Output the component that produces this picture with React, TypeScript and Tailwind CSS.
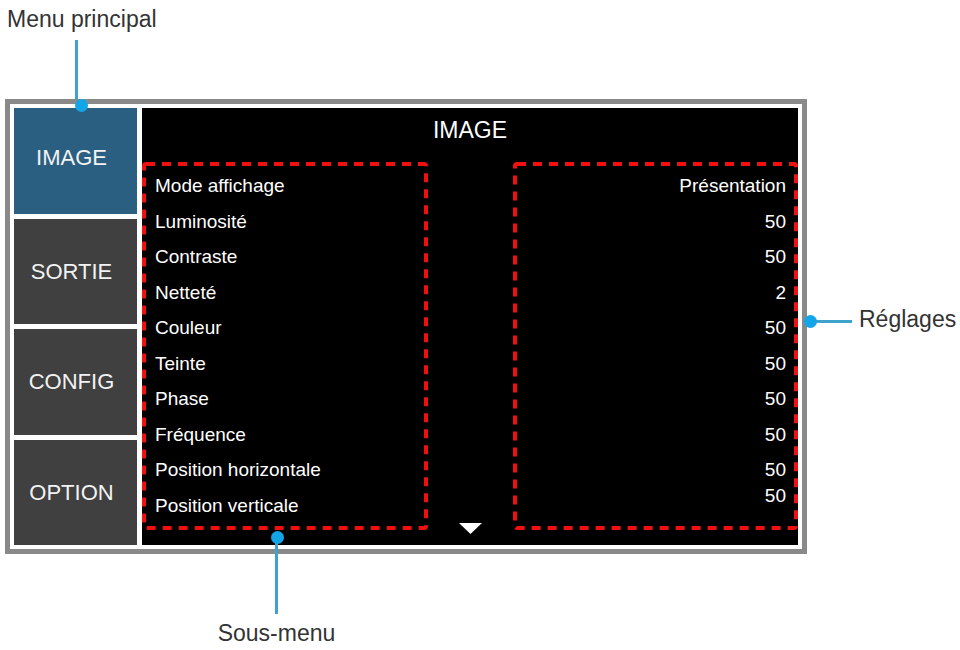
import React from "react";

const labels = [
  "Mode affichage",
  "Luminosité",
  "Contraste",
  "Netteté",
  "Couleur",
  "Teinte",
  "Phase",
  "Fréquence",
  "Position horizontale",
  "Position verticale",
];

const values = ["Présentation", "50", "50", "2", "50", "50", "50", "50", "50", "50"];

const menu = ["IMAGE", "SORTIE", "CONFIG", "OPTION"];

function DashedBox({ w, h }: { w: number; h: number }) {
  return (
    <svg className="absolute inset-0 pointer-events-none" width={w} height={h} viewBox={`0 0 ${w} ${h}`}>
      <rect
        x={2}
        y={2}
        width={w - 4}
        height={h - 4}
        rx={2}
        fill="none"
        stroke="#f01010"
        strokeWidth={4}
        strokeDasharray="9 7"
      />
    </svg>
  );
}

function Dot({ className }: { className: string }) {
  return <div className={`absolute z-10 w-[13px] h-[13px] rounded-full bg-[#12a5e8] ${className}`} />;
}

export default function App() {
  return (
    <div className="w-[960px] h-[650px] bg-white overflow-hidden font-['Liberation_Sans',Arial,sans-serif] text-[#333333] flex flex-col">
      {/* Menu principal callout */}
      <div className="pl-[7px] pt-[8px] text-[23px] leading-[23px] whitespace-nowrap">Menu principal</div>
      <div className="ml-[74.5px] mt-[9px] w-[3px] h-[59px] bg-[#3ea3cc]" />

      {/* Frame row with Réglages callout */}
      <div className="flex items-start">
        <div className="relative ml-[5px] w-[802px] h-[455px] border-[5px] border-[#898989] bg-white p-[4px] flex gap-[5px]">
          <Dot className="left-[65px] top-[-5px]" />
          <Dot className="right-[-15px] top-[211px]" />
          <Dot className="left-[260.5px] bottom-[5.5px]" />
          {/* Main menu */}
          <div className="w-[123px] flex flex-col gap-[5px]">
            {menu.map((m, i) => (
              <div
                key={m}
                className={`flex-1 flex items-center justify-center pr-[8px] text-[22px] text-[#f2f2f2] ${
                  i === 0 ? "bg-[#2b5f82]" : "bg-[#404040]"
                }`}
              >
                <span className={i === 0 ? "mb-[7px]" : ""}>{m}</span>
              </div>
            ))}
          </div>
          {/* Panel */}
          <div className="flex-1 bg-black flex flex-col text-white">
            <div className="h-[54px] pt-[5px] text-center text-[23px] leading-normal">IMAGE</div>
            <div className="flex-1 flex items-start">
              <div className="relative w-[286px] h-[368px] pl-[13px] pt-[6px] text-[19px]">
                <DashedBox w={286} h={368} />
                {labels.map((l) => (
                  <div key={l} className="h-[35.5px] leading-[35.5px] whitespace-nowrap">
                    {l}
                  </div>
                ))}
              </div>
              <div className="flex-1 self-stretch flex items-end justify-center pb-[11px]">
                <svg width="23" height="11" viewBox="0 0 23 11">
                  <polygon points="0,0 23,0 11.5,11" fill="#ffffff" />
                </svg>
              </div>
              <div className="relative w-[285px] h-[368px] pr-[12px] pt-[6px] text-[19px] text-right">
                <DashedBox w={285} h={368} />
                {values.map((v, i) => (
                  <div
                    key={i}
                    className={`h-[35.5px] leading-[35.5px] whitespace-nowrap ${i === 9 ? "-mt-[10px]" : ""}`}
                  >
                    {v}
                  </div>
                ))}
              </div>
            </div>
          </div>
        </div>
        <div className="mt-[221px] w-[45px] h-[3px] bg-[#3ea3cc]" />
        <div className="ml-[7px] mt-[209px] text-[23px] leading-[23px] whitespace-nowrap">Réglages</div>
      </div>

      {/* Sous-menu callout */}
      <div className="ml-[218px] w-[117px] flex flex-col items-center">
        <div className="relative ml-[-1px] -mt-[17px] w-[3px] h-[77px] bg-[#3ea3cc]" />
        <div className="mt-[8px] text-[23px] leading-[23px] whitespace-nowrap">Sous-menu</div>
      </div>
    </div>
  );
}
